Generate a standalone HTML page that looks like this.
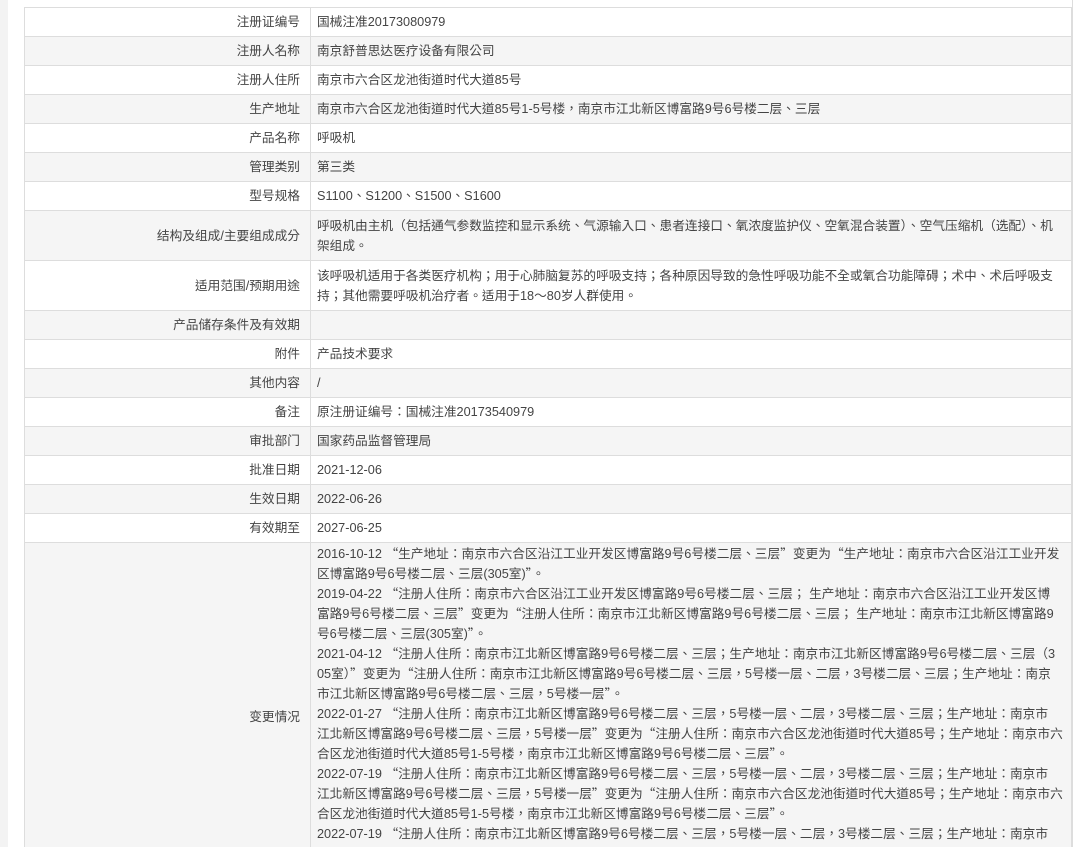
<!DOCTYPE html>
<html><head><meta charset="utf-8"><style>
html,body{margin:0;padding:0;background:#fff;width:1084px;height:847px;overflow:hidden}
body{font-family:"Liberation Sans","Noto Sans CJK TC",sans-serif;font-size:12.7px;color:#444;position:relative}
.lstrip{position:absolute;left:0;top:0;width:8px;height:847px;background:#f3f3f3}
.rline{position:absolute;left:1072px;top:0;width:1px;height:847px;background:#ddd}
table{position:absolute;left:24px;top:7px;width:1048px;border-collapse:collapse;table-layout:fixed}
td{border:1px solid #ddd;padding:0 6px;height:28px;line-height:20px;vertical-align:middle;overflow:hidden}
td.l{width:267px;text-align:right;padding-right:10px;padding-left:8px}
tr:nth-child(even) td{background:#f5f5f5}
.multi td{padding-top:4px;padding-bottom:4px}
.ch div{white-space:nowrap;height:20px;line-height:20px;overflow:visible}
q{quotes:none;font-family:"Noto Sans CJK TC",sans-serif;line-height:1px}
</style></head><body>
<div class="lstrip"></div><div class="rline"></div>
<table>
<tr><td class="l">注册证编号</td><td>国械注准20173080979</td></tr>
<tr><td class="l">注册人名称</td><td>南京舒普思达医疗设备有限公司</td></tr>
<tr><td class="l">注册人住所</td><td>南京市六合区龙池街道时代大道85号</td></tr>
<tr><td class="l">生产地址</td><td>南京市六合区龙池街道时代大道85号1-5号楼，南京市江北新区博富路9号6号楼二层、三层</td></tr>
<tr><td class="l">产品名称</td><td>呼吸机</td></tr>
<tr><td class="l">管理类别</td><td>第三类</td></tr>
<tr><td class="l">型号规格</td><td>S1100、S1200、S1500、S1600</td></tr>
<tr class="multi"><td class="l" style="height:41px">结构及组成/主要组成成分</td><td class="ch"><div>呼吸机由主机（包括通气参数监控和显示系统、气源输入口、患者连接口、氧浓度监护仪、空氧混合装置）、空气压缩机（选配）、机</div><div>架组成。</div></td></tr>
<tr class="multi"><td class="l" style="height:41px">适用范围/预期用途</td><td class="ch"><div>该呼吸机适用于各类医疗机构；用于心肺脑复苏的呼吸支持；各种原因导致的急性呼吸功能不全或氧合功能障碍；术中、术后呼吸支</div><div>持；其他需要呼吸机治疗者。适用于18～80岁人群使用。</div></td></tr>
<tr><td class="l">产品储存条件及有效期</td><td></td></tr>
<tr><td class="l">附件</td><td>产品技术要求</td></tr>
<tr><td class="l">其他内容</td><td>/</td></tr>
<tr><td class="l">备注</td><td>原注册证编号：国械注准20173540979</td></tr>
<tr><td class="l">审批部门</td><td>国家药品监督管理局</td></tr>
<tr><td class="l">批准日期</td><td>2021-12-06</td></tr>
<tr><td class="l">生效日期</td><td>2022-06-26</td></tr>
<tr><td class="l">有效期至</td><td>2027-06-25</td></tr>
<tr class="multi"><td class="l" style="height:340px">变更情况</td><td class="ch" style="vertical-align:top;padding-top:1px">
<div>2016-10-12 <q>“</q>生产地址：南京市六合区沿江工业开发区博富路9号6号楼二层、三层<q>”</q>变更为<q>“</q>生产地址：南京市六合区沿江工业开发</div>
<div>区博富路9号6号楼二层、三层(305室)<q>”</q>。</div>
<div>2019-04-22 <q>“</q>注册人住所：南京市六合区沿江工业开发区博富路9号6号楼二层、三层； 生产地址：南京市六合区沿江工业开发区博</div>
<div>富路9号6号楼二层、三层<q>”</q>变更为<q>“</q>注册人住所：南京市江北新区博富路9号6号楼二层、三层； 生产地址：南京市江北新区博富路9</div>
<div>号6号楼二层、三层(305室)<q>”</q>。</div>
<div>2021-04-12 <q>“</q>注册人住所：南京市江北新区博富路9号6号楼二层、三层；生产地址：南京市江北新区博富路9号6号楼二层、三层（3</div>
<div>05室）<q>”</q>变更为<q>“</q>注册人住所：南京市江北新区博富路9号6号楼二层、三层，5号楼一层、二层，3号楼二层、三层；生产地址：南京</div>
<div>市江北新区博富路9号6号楼二层、三层，5号楼一层<q>”</q>。</div>
<div>2022-01-27 <q>“</q>注册人住所：南京市江北新区博富路9号6号楼二层、三层，5号楼一层、二层，3号楼二层、三层；生产地址：南京市</div>
<div>江北新区博富路9号6号楼二层、三层，5号楼一层<q>”</q>变更为<q>“</q>注册人住所：南京市六合区龙池街道时代大道85号；生产地址：南京市六</div>
<div>合区龙池街道时代大道85号1-5号楼，南京市江北新区博富路9号6号楼二层、三层<q>”</q>。</div>
<div>2022-07-19 <q>“</q>注册人住所：南京市江北新区博富路9号6号楼二层、三层，5号楼一层、二层，3号楼二层、三层；生产地址：南京市</div>
<div>江北新区博富路9号6号楼二层、三层，5号楼一层<q>”</q>变更为<q>“</q>注册人住所：南京市六合区龙池街道时代大道85号；生产地址：南京市六</div>
<div>合区龙池街道时代大道85号1-5号楼，南京市江北新区博富路9号6号楼二层、三层<q>”</q>。</div>
<div>2022-07-19 <q>“</q>注册人住所：南京市江北新区博富路9号6号楼二层、三层，5号楼一层、二层，3号楼二层、三层；生产地址：南京市</div>
</td></tr>
</table>
</body></html>
